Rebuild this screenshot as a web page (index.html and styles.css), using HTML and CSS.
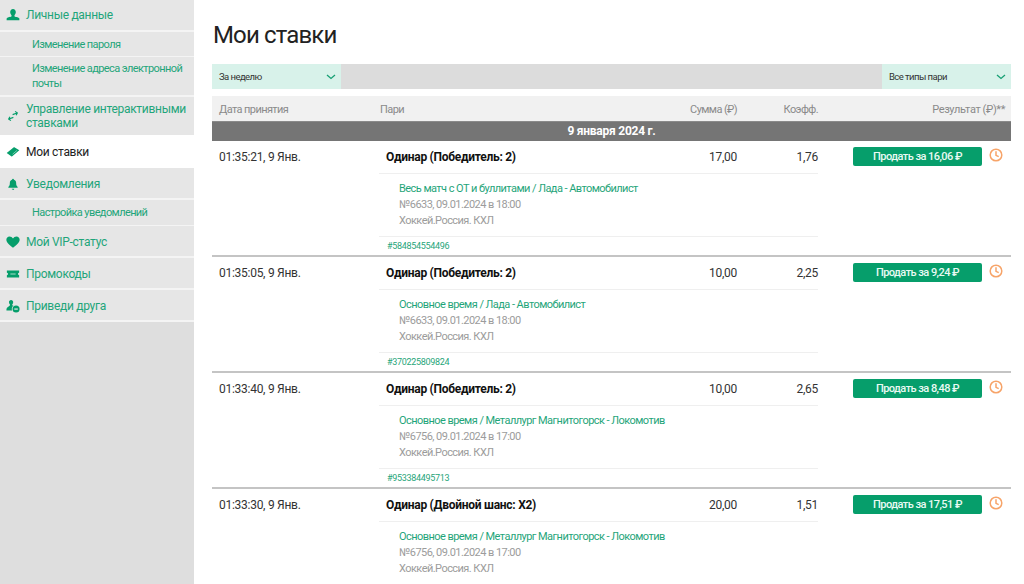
FILE: index.html
```html
<!DOCTYPE html>
<html lang="ru">
<head>
<meta charset="utf-8">
<title>Мои ставки</title>
<link rel="stylesheet" href="styles.css">
</head>
<body>
<div class="page">
  <nav class="side">
    <a class="item first"><svg class="ic" viewBox="0 0 16 16"><path d="M8 1c2 0 3.200 1.500 3.200 3.600 0 1.500-.6 2.900-1.500 3.600v1.100c0 .6 4.800 1.300 5.300 2.200.3.500.3 1.300.3 2.500H.7c0-1.200 0-2 .3-2.500.5-.9 5.300-1.600 5.300-2.200V8.200C5.400 7.500 4.800 6.100 4.800 4.600 4.800 2.500 6 1 8 1z"/></svg><span>Личные данные</span></a>
    <a class="sub">Изменение пароля</a>
    <a class="sub tall">Изменение адреса электронной почты</a>
    <a class="item two"><svg class="ic arrows" viewBox="0 0 16 16"><path d="M7.500 6.200 13.500 4M10.800 1.800l3 2.100-1.600 3.200M8.500 9.800 2.500 12M5.200 14.200l-3-2.100 1.600-3.200" fill="none" stroke="currentColor" stroke-width="1.500"/></svg><span>Управление интерактивными ставками</span></a>
    <a class="item active"><svg class="ic" viewBox="0 0 16 16"><path d="M.8 9 8.600 2.900c.5-.4 1-.4 1.400-.1l5.200 3.200-7.700 6.700c-.5.400-1 .4-1.500.1z"/><path d="M7.500 10.500 12.500 6.200" stroke="#bfe6d8" stroke-width=".7"/></svg><span>Мои ставки</span></a>
    <a class="item"><svg class="ic small" viewBox="0 0 16 16"><path d="M8 1c.8 0 1.200.5 1.300 1.200 2 .6 2.900 2.200 2.900 4.300 0 2.800.8 4.200 2 5.500v1H1.800v-1c1.200-1.300 2-2.700 2-5.500 0-2.100.9-3.700 2.900-4.300C6.800 1.500 7.200 1 8 1zM6.300 14.400h3.400C9.600 15.400 8.900 16 8 16s-1.600-.6-1.700-1.600z"/></svg><span>Уведомления</span></a>
    <a class="sub wide">Настройка уведомлений</a>
    <a class="item"><svg class="ic" viewBox="0 0 16 16"><path d="M8 14.500C4 11.500.4 8.700.4 5.400.4 3.200 2 1.700 4 1.700c1.700 0 3.100.9 4 2.300.9-1.400 2.300-2.300 4-2.300 2 0 3.600 1.500 3.600 3.700 0 3.300-3.600 6.100-7.600 9.100z"/></svg><span>Мой VIP-статус</span></a>
    <a class="item"><svg class="ic" viewBox="0 0 16 16"><path d="M1 4h14v2.700a1.300 1.300 0 0 0 0 2.600V12H1V9.300a1.300 1.300 0 0 0 0-2.600z"/><path d="M5 8h6" stroke="#bfe6d8" stroke-width="1"/></svg><span>Промокоды</span></a>
    <a class="item"><svg class="ic" viewBox="0 0 16 16"><path d="M5.800 1c1.500 0 2.400 1.100 2.400 2.600 0 1.100-.4 2-1.100 2.600v.9c.5.300 1 .5 1.500.7-1.200.8-2 2-2 3.500 0 .6.100 1.200.4 1.700H.5c0-1.300 0-2.200.5-2.800.7-1 3.500-2.100 3.500-3V6.200C3.800 5.600 3.400 4.700 3.400 3.600 3.400 2.100 4.300 1 5.800 1z"/><circle cx="11.500" cy="11.500" r="4"/><path d="M9.500 11.500h4" stroke="#e6e6e6" stroke-width="1.400"/></svg><span>Приведи друга</span></a>
  </nav>
  <main class="main">
    <h1 class="title">Мои ставки</h1>
    <div class="filters">
      <div class="select"><span>За неделю</span><svg class="chev" viewBox="0 0 10 6"><path d="M1 1l4 3.500L9 1" fill="none" stroke="currentColor" stroke-width="1.300"/></svg></div>
      <div class="select"><span>Все типы пари</span><svg class="chev" viewBox="0 0 10 6"><path d="M1 1l4 3.500L9 1" fill="none" stroke="currentColor" stroke-width="1.300"/></svg></div>
    </div>
    <div class="thead">
      <span>Дата принятия</span><span>Пари</span><span class="num">Сумма (₽)</span><span class="num">Коэфф.</span><span class="num result">Результат (₽)**</span>
    </div>
    <div class="date">9 января 2024 г.</div>

    <article class="bet">
      <div class="when">01:35:21, 9 Янв.</div>
      <div class="body">
        <div class="head"><b>Одинар (Победитель: 2)</b><span class="amt">17,00</span><span class="coef">1,76</span></div>
        <div class="info"><a>Весь матч с ОТ и буллитами / Лада - Автомобилист</a><p>№6633, 09.01.2024 в 18:00</p><p>Хоккей.Россия. КХЛ</p></div>
        <div class="code">#584854554496</div>
      </div>
      <div class="act"><button class="sell">Продать за 16,06 ₽</button><svg class="clock" viewBox="0 0 14 14"><circle cx="7" cy="7" r="5.800"/><path d="M7 3.300V7.300l2.700 1.400"/></svg></div>
    </article>

    <article class="bet">
      <div class="when">01:35:05, 9 Янв.</div>
      <div class="body">
        <div class="head"><b>Одинар (Победитель: 2)</b><span class="amt">10,00</span><span class="coef">2,25</span></div>
        <div class="info"><a>Основное время / Лада - Автомобилист</a><p>№6633, 09.01.2024 в 18:00</p><p>Хоккей.Россия. КХЛ</p></div>
        <div class="code">#370225809824</div>
      </div>
      <div class="act"><button class="sell">Продать за 9,24 ₽</button><svg class="clock" viewBox="0 0 14 14"><circle cx="7" cy="7" r="5.800"/><path d="M7 3.300V7.300l2.700 1.400"/></svg></div>
    </article>

    <article class="bet">
      <div class="when">01:33:40, 9 Янв.</div>
      <div class="body">
        <div class="head"><b>Одинар (Победитель: 2)</b><span class="amt">10,00</span><span class="coef">2,65</span></div>
        <div class="info"><a>Основное время / Металлург Магнитогорск - Локомотив</a><p>№6756, 09.01.2024 в 17:00</p><p>Хоккей.Россия. КХЛ</p></div>
        <div class="code">#953384495713</div>
      </div>
      <div class="act"><button class="sell">Продать за 8,48 ₽</button><svg class="clock" viewBox="0 0 14 14"><circle cx="7" cy="7" r="5.800"/><path d="M7 3.300V7.300l2.700 1.400"/></svg></div>
    </article>

    <article class="bet">
      <div class="when">01:33:30, 9 Янв.</div>
      <div class="body">
        <div class="head"><b>Одинар (Двойной шанс: X2)</b><span class="amt">20,00</span><span class="coef">1,51</span></div>
        <div class="info"><a>Основное время / Металлург Магнитогорск - Локомотив</a><p>№6756, 09.01.2024 в 17:00</p><p>Хоккей.Россия. КХЛ</p></div>
      </div>
      <div class="act"><button class="sell">Продать за 17,51 ₽</button><svg class="clock" viewBox="0 0 14 14"><circle cx="7" cy="7" r="5.800"/><path d="M7 3.300V7.300l2.700 1.400"/></svg></div>
    </article>
  </main>
</div>
</body>
</html>
```
FILE: styles.css
```css
* { box-sizing: border-box; }
html, body { margin: 0; height: 100%; overflow: hidden; background: #fff; }
body { font-family: Roboto, "Liberation Sans", sans-serif; color: #222; }
.page { display: flex; height: 584px; overflow: hidden; }

.side { width: 194px; flex: none; background: #dedede; display: flex; flex-direction: column; }
.item, .sub { display: flex; flex: none; align-items: center; background: #e6e6e6; color: #1fa57a; }
.item { gap: 6px; height: 32px; padding: 1px 0 0 6px; font-size: 12px; line-height: 14px; letter-spacing: -.3px; border-bottom: 2px solid #f4f4f4; }
.item.first { padding-top: 0; }
.item.two { height: 38px; padding-top: 0; border-bottom: 0; }
.item.active { height: 33px; background: #fff; color: #222; border-bottom: 0; }
.ic { width: 14px; height: 14px; flex: none; fill: #069e6b; color: #069e6b; }
.ic.small { width: 12px; height: 12px; margin: 0 1px; }
.ic.arrows { width: 12px; height: 12px; margin: 0 1px; }
.sub { height: 25px; padding-left: 32px; font-size: 11px; line-height: 15px; letter-spacing: -.6px; border-bottom: 1px solid #f4f4f4; }
.sub.wide { height: 26px; }
.sub.tall { height: 40px; padding-right: 4px; border-bottom-width: 2px; }

.main { width: 799px; margin-left: 18px; flex: none; display: flex; flex-direction: column; }
.main > * { flex: none; }
.title { margin: 0; height: 64px; padding: 20px 0 0 1px; font-size: 24px; line-height: 30px; font-weight: 400; letter-spacing: -.85px; color: #222; }
.filters { display: flex; justify-content: space-between; height: 25px; background: #dcdcdc; }
.select { display: flex; align-items: center; justify-content: space-between; width: 129px; background: #d8f2ea; font-size: 9.500px; letter-spacing: -.55px; color: #333; padding: 0 5px 0 7px; }
.chev { width: 10px; height: 6px; color: #17a074; }

.thead { display: grid; grid-template-columns: 161px 1fr 70px 81px 187px; align-items: center; height: 26px; margin-top: 7px; padding: 1px 6px 0 7px; background: #f1f1f1; color: #8a8a8a; font-size: 11px; letter-spacing: -.6px; border-bottom: 1px solid #8a8a8a; }
.num { text-align: right; }
.result { letter-spacing: -.4px; }
.date { height: 19px; background: #757575; color: #fff; font-size: 12px; font-weight: 700; letter-spacing: -.25px; line-height: 19px; text-align: center; }

.bet { display: flex; height: 116px; border-bottom: 2px solid #c4c4c4; }
.when { width: 167px; flex: none; padding: 8px 0 0 7px; font-size: 12px; line-height: 16px; letter-spacing: -.27px; color: #333; }
.body { width: 439px; flex: none; display: flex; flex-direction: column; }
.head { display: flex; height: 33px; align-items: center; padding: 0 0 0 7px; border-bottom: 1px solid #efefef; font-size: 12px; letter-spacing: -.27px; color: #333; }
.head b { flex: 1; color: #111; }
.amt { width: 60px; text-align: right; }
.coef { width: 81px; text-align: right; }
.info { height: 63px; padding: 7px 0 0 20px; border-bottom: 1px solid #efefef; font-size: 11px; line-height: 16px; letter-spacing: -.55px; color: #9c9c9c; }
.info a { display: block; color: #1fa57a; }
.info p { margin: 0; }
.code { height: 18px; padding: 3px 0 0 8px; font-size: 9px; line-height: 12px; letter-spacing: -.3px; color: #1fa57a; }

.act { flex: 1; display: flex; align-items: flex-start; padding: 6px 0 0 35px; }
.sell { width: 129px; height: 19px; padding: 0; border: 0; border-radius: 2px; background: #069e6b; color: #eafaf4; font: 500 11px/19px Roboto, sans-serif; letter-spacing: -.55px; text-align: center; }
.clock { width: 14px; height: 14px; margin: 1px 0 0 7px; fill: none; stroke: #f7a469; stroke-width: 1.500; }
```
